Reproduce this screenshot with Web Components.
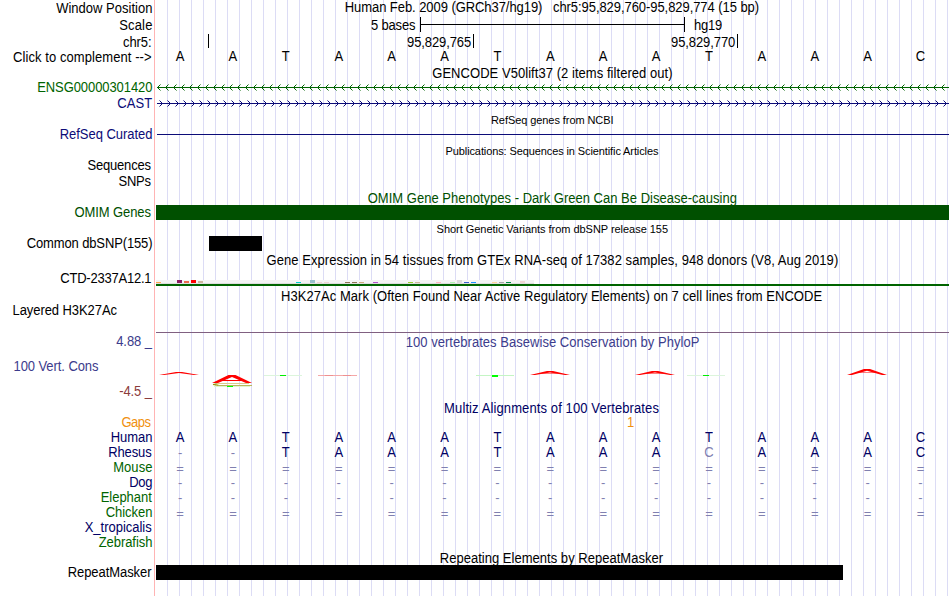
<!DOCTYPE html>
<html lang="en"><head><meta charset="utf-8"><title>Genome Browser</title>
<style>body{margin:0;background:#fff;overflow:hidden}</style></head>
<body>
<genome-browser></genome-browser>
<script>
const ctx = document.createElement('canvas').getContext('2d');

// A run of text whose visible glyphs span exactly `w` pixels.
class FitText extends HTMLElement {
  connectedCallback() {
    const text = this.getAttribute('text'), size = this.getAttribute('size') || 13;
    const w = parseFloat(this.getAttribute('w'));
    const root = this.attachShadow({mode: 'open'});
    root.innerHTML = `<style>:host{display:block;flex:none;white-space:pre;font:${size}px/13px "Liberation Sans",Arial,sans-serif}
      span{display:block;margin:1px 0;${size == 13 ? 'transform:scaleY(1.06);transform-origin:0 11px' : ''}}</style><span></span>`;
    root.querySelector('span').textContent = text;
    if (!w) return;
    ctx.font = size + 'px "Liberation Sans"';
    const m = ctx.measureText(text);
    const s = (w - m.actualBoundingBoxLeft - m.actualBoundingBoxRight) / Math.max(1, text.length - 1);
    this.style.letterSpacing = s + 'px';
    this.style.marginLeft = m.actualBoundingBoxLeft + 'px';
    this.style.marginRight = -(m.width - m.actualBoundingBoxRight + s) + 'px';
  }
}
customElements.define('fit-text', FitText);

// One horizontal band: left label and right content.
class TrackRow extends HTMLElement {
  connectedCallback() {
    const a = n => this.getAttribute(n);
    this.attachShadow({mode: 'open'}).innerHTML = `<style>
      :host{display:grid;grid-template-columns:155px 795px;height:${a('h')}px;flex:none}
      .label{display:flex;justify-content:${a('left') !== null ? 'flex-start' : 'flex-end'};align-items:flex-start;
        padding:0 ${a('pr') || 2.8}px 0 13.5px;color:${a('color') || '#000'}}
      .label fit-text{margin-top:${a('ly') || 0}px}
      .data{display:flow-root;min-width:0;height:${a('h')}px}
    </style><div class="label">${a('label') ? `<fit-text text="${a('label')}" w="${a('w')}"></fit-text>` : ''}</div>
    <div class="data"><slot></slot></div>`;
  }
}
customElements.define('track-row', TrackRow);

class TrackTitle extends HTMLElement {
  connectedCallback() {
    const a = n => this.getAttribute(n);
    this.attachShadow({mode: 'open'}).innerHTML = `<style>
      :host{display:flex;justify-content:center;padding-right:.5px;color:${a('color') || '#000'}}
      fit-text{margin-top:${a('y') || 0}px}
    </style><fit-text text="${a('text')}" w="${a('w')}" size="${a('size') || 13}"></fit-text>`;
  }
}
customElements.define('track-title', TrackTitle);

// Fifteen evenly spaced bases; lower-contrast symbols for gaps and mismatches.
class BaseRow extends HTMLElement {
  connectedCallback() {
    const faint = (this.getAttribute('faint') || '').split(',');
    const cells = [...this.getAttribute('seq')].map((c, i) =>
      `<span class="${c === '-' || c === '=' ? 'f s' : ''} ${faint.includes(String(i)) ? 'f' : ''} ${c === '=' ? 'e' : ''}">${c}</span>`).join('');
    this.attachShadow({mode: 'open'}).innerHTML = `<style>
      :host{display:grid;grid-template-columns:repeat(15,52.9px);margin-left:-1.4px;padding-top:1px;
        font:13px/13px "Liberation Sans",Arial,sans-serif;color:${this.getAttribute('color') || '#000064'};text-align:center}
      span{transform:scaleY(1.06);transform-origin:0 11px}
      .f{color:#8080b0}.s{transform:none}.e{padding-top:1px}
    </style>${cells}`;
  }
}
customElements.define('base-row', BaseRow);

// Scale bar and coordinate ticks.
class RulerRow extends HTMLElement {
  connectedCallback() {
    const parts = this.getAttribute('parts').split('|').map(p => {
      const [kind, gap, w, text] = p.split(';');
      if (kind === 't') return `<fit-text text="${text}" w="${w}" style="padding-left:${gap}px"></fit-text>`;
      return `<i class="${kind}" style="margin-left:${gap}px;width:${w}px"></i>`;
    }).join('');
    this.attachShadow({mode: 'open'}).innerHTML = `<style>
      :host{display:flex;align-items:flex-start}
      fit-text{margin-top:1px}
      i{box-sizing:border-box;flex:none;height:14px}
      .tick{background:#000}
      .bar{height:15px;border:solid #000;border-width:0 1px;background:linear-gradient(#000,#000) 0 7px/100% 1px no-repeat}
    </style>${parts}`;
  }
}
customElements.define('ruler-row', RulerRow);

// Drawing surface in image coordinates; `y` is the first pixel row.
class FeatureBand extends HTMLElement {
  connectedCallback() {
    const y = +this.getAttribute('y'), h = +this.getAttribute('h'), kind = this.getAttribute('kind');
    let g = '';
    const rect = (x, yy, w, hh, c) => `<rect x="${x}" y="${yy}" width="${w}" height="${hh}" fill="${c}"/>`;
    if (kind === 'solid') g = rect(this.getAttribute('x'), this.getAttribute('top') || y, this.getAttribute('w'), this.getAttribute('t') || h, this.getAttribute('color'));
    if (kind === 'rev') {
      g = rect(157, 87, 792, 1, '#006400');
      let d = ''; for (let x = 157.5; x < 949; x += 8) d += `M${x + 3} 84.5l-3 3l3 3`;
      g += `<path d="${d}" fill="none" stroke="#006400"/>`;
    }
    if (kind === 'fwd') {
      g = rect(157, 103, 792, 1, '#0c0c78');
      let d = ''; for (let x = 162; x < 949; x += 8) d += `M${x - 2.5} 100.5l3 3l-3 3`;
      g += `<path d="${d}" fill="none" stroke="#0c0c78"/>`;
    }
    if (kind === 'gtex') {
      g = rect(156, 280, 378, 4, '#f3f3f3') + rect(156, 283, 378, 1, '#dedede');
      const bars = [[156,1,'#ffa54f'],[177,3,'#8b1c62'],[184,2,'#ee6a50'],[191,3,'#ff0000'],[198,2,'#cdb79e'],[296,1,'#00cdcd'],
        [310,3,'#9ac0cd'],[317,1,'#eed5d2'],[324,1,'#eed5d2'],[345,1,'#8b7355'],[352,1,'#8b7355'],[359,1,'#cdaa7d'],[373,1,'#b452cd'],
        [408,1,'#9acd32'],[415,1,'#cdb79e'],[436,1,'#ffb6c1'],[450,1,'#b4eeb4'],[457,3,'#d9d9d9'],[464,1,'#3a5fcd'],[471,1,'#1e90ff'],
        [492,1,'#ffd39b'],[499,1,'#a6a6a6'],[506,1,'#008b45'],[520,2,'#eed5d2']];
      g += bars.map(([x, n, c]) => rect(x, 283 - n, 5, n, c)).join('') + rect(156, 284, 793, 2, '#006400');
    }
    if (kind === 'phylop') {
      const peak = (cx, top, bot, t, bar) =>
        `<path d="M${cx - 20} ${bot}L${cx - 3} ${top}H${cx + 3}L${cx + 20} ${bot}H${cx + 15}L${cx} ${top + t}L${cx - 15} ${bot}Z" fill="#f00"/>` +
        (bar ? `<rect x="${cx - 9}" y="${bar}" width="18" height="1" fill="#f00" opacity=".5"/>` : '');
      g = peak(179, 372, 375, 1, 0) + peak(550, 371, 375, 1.4, 373) + peak(655, 371, 375, 1.4, 373) + peak(867, 369, 375, 1.7, 372);
      g += `<path d="M212 383L228.500 375H235.500L252 383H246L232 377L218 383Z" fill="#f00"/>` + rect(222, 380, 20, 1, '#f00') +
        `<path d="M213 384.500L219 383.500M213 384.500L219 385.500" stroke="#999900" stroke-width="1.2"/>` +
        rect(217, 383, 32, 1, '#dccb8a') + rect(218, 385, 34, 1, '#b8b85a') + rect(214, 386, 36, 1, '#e0f5d0') + rect(227, 386, 6, 1, '#0f0');
      g += rect(264, 375, 38, 1, '#dcf5dc') + rect(280, 375, 6, 1, '#0e0') +
        rect(318, 375, 39, 1, '#f5a8a8') + rect(325, 375, 8, 1, '#ee9090') + rect(343, 375, 8, 1, '#ee9090') +
        rect(476, 375, 38, 1, '#c4f5c4') + rect(492, 375, 6, 2, '#0f0') +
        rect(687, 375, 38, 1, '#dcf5dc') + rect(703, 375, 6, 1, '#0e0');
    }
    this.attachShadow({mode: 'open'}).innerHTML = `<style>:host,svg{display:block}</style>
      <svg width="795" height="${h}" viewBox="155 ${y} 795 ${h}">${g}</svg>`;
  }
}
customElements.define('feature-band', FeatureBand);

class GenomeBrowser extends HTMLElement {
  connectedCallback() {
    const N = '#0c0c78', D = '#000064', G = '#006400', O = '#005000', C = '#3c3c8c';
    this.attachShadow({mode: 'open'}).innerHTML = `<style>
      :host{display:flex;flex-direction:column;width:950px;height:596px;overflow:hidden;
        background:linear-gradient(#ffb4b4,#ffb4b4) 154px 0/1px 100% no-repeat,
        repeating-linear-gradient(90deg,#dcdcf5 0 1px,transparent 1px 12px) 167px 0/782px 100% no-repeat #fff}
      .gap{padding-left:472px;color:#f09010}
    </style>
    <track-row h="17" ly="1" label="Window Position" w="96"><track-title text="Human Feb. 2009 (GRCh37/hg19)   chr5:95,829,760-95,829,774 (15 bp)" w="413"></track-title></track-row>
    <track-row h="17" ly="1" label="Scale" w="33"><ruler-row parts="t;216;45;5 bases|bar;4;265|t;9;28;hg19"></ruler-row></track-row>
    <track-row h="15" ly="1" label="chr5:" w="28" pr="4"><ruler-row parts="tick;53;1|t;198;64;95,829,765|tick;2;1|t;197;64;95,829,770|tick;2;1"></ruler-row></track-row>
    <track-row h="16" ly="1" label="Click to complement --&gt;" w="138" pr="4"><base-row seq="AATAAATAAATAAAC" color="#000"></base-row></track-row>
    <track-row h="15"><track-title y="1" text="GENCODE V50lift37 (2 items filtered out)" w="240"></track-title></track-row>
    <track-row h="15" label="ENSG00000301420" w="114" color="${G}"><feature-band kind="rev" y="80" h="15"></feature-band></track-row>
    <track-row h="16" ly="1" label="CAST" w="35" color="${N}"><feature-band kind="fwd" y="95" h="16"></feature-band></track-row>
    <track-row h="16"><track-title y="2" size="11" text="RefSeq genes from NCBI" w="122.500"></track-title></track-row>
    <track-row h="15" label="RefSeq Curated" w="91.500" color="${N}"><feature-band kind="solid" y="127" h="15" x="157" top="134" w="792" t="1" color="${N}"></feature-band></track-row>
    <track-row h="16"><track-title y="2" size="11" text="Publications: Sequences in Scientific Articles" w="214"></track-title></track-row>
    <track-row h="15" label="Sequences" w="64" pr="3.500"></track-row>
    <track-row h="16" ly="1" label="SNPs" w="33" pr="3.500"></track-row>
    <track-row h="16"><track-title y="2" text="OMIM Gene Phenotypes - Dark Green Can Be Disease-causing" w="369" color="${O}"></track-title></track-row>
    <track-row h="15" label="OMIM Genes" w="77" pr="3.500" color="${O}"><feature-band kind="solid" y="205" h="15" x="156" w="793" color="${O}"></feature-band></track-row>
    <track-row h="16"><track-title y="2" size="11" text="Short Genetic Variants from dbSNP release 155" w="231.500"></track-title></track-row>
    <track-row h="15" label="Common dbSNP(155)" w="125.500"><feature-band kind="solid" y="236" h="15" x="209" w="53" color="#000"></feature-band></track-row>
    <track-row h="16"><track-title y="2" text="Gene Expression in 54 tissues from GTEx RNA-seq of 17382 samples, 948 donors (V8, Aug 2019)" w="572"></track-title></track-row>
    <track-row h="21" ly="4" label="CTD-2337A12.1" w="91" pr="3.700"><feature-band kind="gtex" y="267" h="21"></feature-band></track-row>
    <track-row h="16"><track-title y="1" text="H3K27Ac Mark (Often Found Near Active Regulatory Elements) on 7 cell lines from ENCODE" w="541"></track-title></track-row>
    <track-row h="29" ly="-1" left label="Layered H3K27Ac" w="104"><feature-band kind="solid" y="304" h="29" x="156" top="332" w="793" t="1" color="#806080"></feature-band></track-row>
    <track-row h="17" ly="1" label="4.88 _" w="36.500" pr="2.300" color="${C}"><track-title y="2" text="100 vertebrates Basewise Conservation by PhyloP" w="293" color="${C}"></track-title></track-row>
    <track-row h="34" ly="9" left label="100 Vert. Cons" w="85.500" color="${C}"><feature-band kind="phylop" y="350" h="40"></feature-band></track-row>
    <track-row h="16" label="-4.5 _" w="33.500" pr="2.300" color="#8c3c3c"></track-row>
    <track-row h="16"><track-title y="1" text="Multiz Alignments of 100 Vertebrates" w="215" color="${D}"></track-title></track-row>
    <track-row h="14" ly="-1" label="Gaps" w="30" pr="3.500" color="#f09010"><fit-text class="gap" text="1" style="margin-top:-1px"></fit-text></track-row>
    <track-row h="15" label="Human" w="40.500" color="${D}"><base-row seq="AATAAATAAATAAAC"></base-row></track-row>
    <track-row h="15" label="Rhesus" w="43" color="${D}"><base-row seq="--TAAATAAACAAAC" faint="10"></base-row></track-row>
    <track-row h="15" label="Mouse" w="38" color="${G}"><base-row seq="==============="></base-row></track-row>
    <track-row h="15" label="Dog" w="22" color="${D}"><base-row seq="---------------"></base-row></track-row>
    <track-row h="15" label="Elephant" w="50.500" color="${G}"><base-row seq="---------------"></base-row></track-row>
    <track-row h="15" label="Chicken" w="46.500" color="${G}"><base-row seq="==============="></base-row></track-row>
    <track-row h="15" label="X_tropicalis" w="67.500" color="${D}"></track-row>
    <track-row h="15" label="Zebrafish" w="53.500" color="${G}"></track-row>
    <track-row h="15"><track-title y="1" text="Repeating Elements by RepeatMasker" w="223"></track-title></track-row>
    <track-row h="15" label="RepeatMasker" w="83.500"><feature-band kind="solid" y="565" h="15" x="156" w="687" color="#000"></feature-band></track-row>`;
  }
}
customElements.define('genome-browser', GenomeBrowser);
</script>
</body></html>
